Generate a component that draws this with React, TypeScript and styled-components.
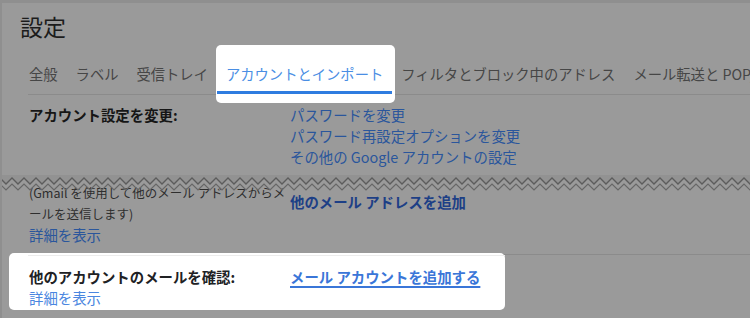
import React from "react";
import styled, { createGlobalStyle } from "styled-components";

const GlobalStyle = createGlobalStyle`
  html, body { margin: 0; padding: 0; background: #9a9a9a; }
  body { font-family: "Noto Sans CJK JP", "Noto Sans", sans-serif; }
`;

const Frame = styled.div`
  width: 750px;
  height: 318px;
  box-sizing: border-box;
  overflow: hidden;
  background: #9a9a9a;
  border-top: 3px solid #8f8f8f;
  border-left: 2px solid #8f8f8f;
`;

const Header = styled.header`
  padding-left: 18px;
`;

const Title = styled.h1`
  margin: 8px 0 9px;
  font-size: 23px;
  line-height: 30px;
  font-weight: 400;
  color: #1c1c1c;
`;

const TabBar = styled.nav`
  margin-left: 8px;
  height: 44px;
  border-bottom: 1px solid #8b8b8b;
  white-space: nowrap;
`;

const TabTrack = styled.div`
  display: flex;
  height: 100%;
  margin-left: -8px;
`;

const Tab = styled.div<{ $active?: boolean }>`
  display: flex;
  align-items: center;
  box-sizing: border-box;
  height: 100%;
  padding: ${(p) => (p.$active ? "5px" : "2px")} 9px 0;
  font-size: 14.3px;
  color: ${(p) => (p.$active ? "#4a8ee4" : "#464646")};
  border-bottom: ${(p) => (p.$active ? "3px solid #2f7ce0" : "none")};
  flex: none;
`;

const Spot = styled.div`
  position: relative;
  z-index: 0;
  display: flex;
  &::before {
    content: "";
    position: absolute;
    inset: -5px -3px -9px -1px;
    background: #ffffff;
    border-radius: 5px;
    z-index: -1;
  }
`;

const Section = styled.section<{ $divider?: boolean }>`
  margin-left: 26px;
  padding: ${(p) => (p.$divider ? "0 0 9px 1px" : "9px 0 0 1px")};
  display: grid;
  grid-template-columns: 261px 1fr;
  border-bottom: ${(p) => (p.$divider ? "1px solid #8b8b8b" : "none")};
`;

const Column = styled.div<{ $pad?: number }>`
  display: flex;
  flex-direction: column;
  align-items: flex-start;
  padding-top: ${(p) => p.$pad ?? 0}px;
`;

const Label = styled.div<{ $lit?: boolean }>`
  font-size: 14.4px;
  line-height: 21px;
  font-weight: 700;
  color: ${(p) => (p.$lit ? "#202124" : "#161616")};
  white-space: nowrap;
`;

const Desc = styled.div`
  font-size: 12.5px;
  line-height: 21px;
  color: #2e2e2e;
  white-space: nowrap;
`;

const Link = styled.a<{ $lit?: boolean; $bold?: boolean }>`
  font-size: 14.4px;
  line-height: 21px;
  font-weight: ${(p) => (p.$bold ? 700 : 400)};
  color: ${(p) =>
    p.$lit
      ? p.$bold
        ? "#3a76d8"
        : "#4a86e0"
      : p.$bold
      ? "#1d3f86"
      : "#2a569c"};
  text-decoration: ${(p) => (p.$lit && p.$bold ? "underline" : "none")};
  text-underline-offset: 3px;
  text-decoration-thickness: 1.5px;
  white-space: nowrap;
  cursor: pointer;
`;

const Tear = styled.div`
  position: relative;
  z-index: 1;
  height: 18px;
  margin: 8px 0 -11px -2px;
  svg { display: block; }
`;

const HighlightCard = styled.div`
  margin: -2px 0 0 7px;
  width: 496px;
  height: 57px;
  box-sizing: border-box;
  padding-top: 2px;
  background: #ffffff;
  border-radius: 5px;
`;

const CardRow = styled.div`
  margin-left: 19px;
  padding: 10px 0 0 1px;
  border-top: 1px solid #ececec;
  display: grid;
  grid-template-columns: 261px 1fr;
`;

function zig(y0: number, y1: number) {
  const pts: string[] = [];
  for (let i = 0; i <= 130; i++) {
    pts.push(`${i * 6},${i % 2 === 0 ? y0 : y1}`);
  }
  return pts.join(" ");
}

const upper = zig(3, 9);
const lower = zig(9, 15);

export default function App() {
  return (
    <>
      <GlobalStyle />
      <Frame>
        <Header>
          <Title>設定</Title>
          <TabBar>
            <TabTrack>
              <Tab>全般</Tab>
              <Tab>ラベル</Tab>
              <Tab>受信トレイ</Tab>
              <Spot>
                <Tab $active>アカウントとインポート</Tab>
              </Spot>
              <Tab>フィルタとブロック中のアドレス</Tab>
              <Tab>メール転送と POP/IMAP</Tab>
            </TabTrack>
          </TabBar>
        </Header>

        <Section>
          <Column>
            <Label>アカウント設定を変更:</Label>
          </Column>
          <Column>
            <Link>パスワードを変更</Link>
            <Link>パスワード再設定オプションを変更</Link>
            <Link>その他の Google アカウントの設定</Link>
          </Column>
        </Section>

        <Tear>
          <svg width="752" height="18" viewBox="0 0 752 18">
            <polygon points={`0,0 752,0 ${upper.split(" ").reverse().join(" ")}`} fill="#929292" />
            <polyline points={lower} fill="none" stroke="#676767" strokeWidth="1.2" />
            <polyline points={upper} fill="none" stroke="#5c5c5c" strokeWidth="1.3" />
          </svg>
        </Tear>

        <Section $divider>
          <Column>
            <Desc>
              (Gmail を使用して他のメール アドレスからメ
              <br />
              ールを送信します)
            </Desc>
            <Link>詳細を表示</Link>
          </Column>
          <Column $pad={9}>
            <Link $bold>他のメール アドレスを追加</Link>
          </Column>
        </Section>

        <HighlightCard>
          <CardRow>
            <Column>
              <Label $lit>他のアカウントのメールを確認:</Label>
              <Link $lit>詳細を表示</Link>
            </Column>
            <Column>
              <Link $lit $bold>メール アカウントを追加する</Link>
            </Column>
          </CardRow>
        </HighlightCard>
      </Frame>
    </>
  );
}
